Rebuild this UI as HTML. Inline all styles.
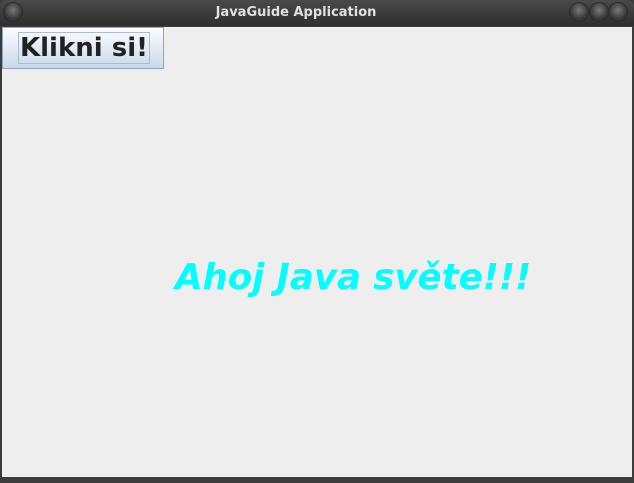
<!DOCTYPE html>
<html><head><style>
html,body{margin:0;padding:0;width:634px;height:483px;overflow:hidden;background:#3a3a3a}
.win{position:absolute;left:0;top:0;width:634px;height:483px;background:#3c3c3c;border-radius:6px 6px 0 0}
.tb{position:absolute;left:0;top:0;width:634px;height:26px;background:linear-gradient(#4a4a4a,#2e2e2e);border-radius:6px 6px 0 0}
.title{position:absolute;left:0;width:592px;top:5px;text-align:center;color:#e0e0e0;font:bold 13px "DejaVu Sans","Liberation Sans",sans-serif}
.c{position:absolute;top:3px;width:18px;height:18px;border-radius:50%;background:radial-gradient(circle at 50% 40%,#7a7a7a,#3a3a3a 60%,#222);box-shadow:0 0 0 1px #2a2a2a}
.content{position:absolute;left:2px;top:27px;width:630px;height:450px;background:#eeeeee}
.btn{position:absolute;left:2px;top:27px;width:162px;height:42px;border:1px solid #8fa6bf;background:linear-gradient(#fbfcfe,#dde8f3 60%,#c9d9ea);box-sizing:border-box}
.btn span{position:absolute;left:15px;top:4px;width:132px;height:32px;border:1px solid #a9bdd2;box-sizing:border-box;font:bold 26px "DejaVu Sans",sans-serif;color:#222;line-height:30px;text-align:center;white-space:nowrap}
.msg{position:absolute;left:175px;top:257px;font:italic bold 35.5px "DejaVu Sans",sans-serif;color:#00ffff;white-space:nowrap}
</style></head><body>
<div class="win">
<div class="tb">
<div class="c" style="left:4px"></div>
<div class="title">JavaGuide Application</div>
<div class="c" style="left:570px"></div>
<div class="c" style="left:590px"></div>
<div class="c" style="left:609px"></div>
</div>
<div class="content"></div>
<div class="btn"><span>Klikni si!</span></div>
<div class="msg">Ahoj Java světe!!!</div>
</div>
</body></html>
